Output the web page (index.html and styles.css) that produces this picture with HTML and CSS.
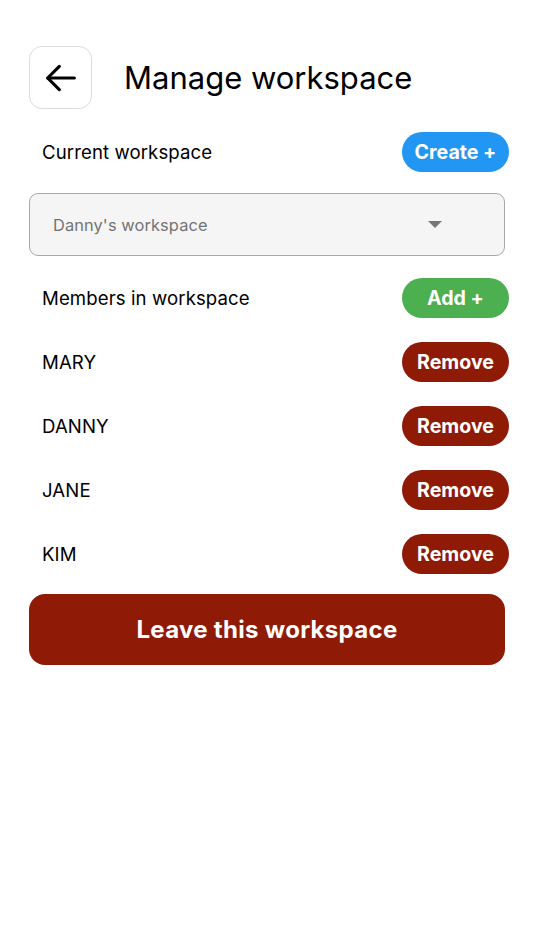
FILE: index.html
```html
<!DOCTYPE html>
<html lang="en">
<head>
    <meta charset="UTF-8">
    <meta name="viewport" content="width=device-width, initial-scale=1.0">
    <title>Manage workspace</title>
    <link rel="stylesheet" href="styles.css">
</head>
<body>
    <div class="page">
        <div class="header">
            <button class="back-btn" aria-label="Back">
                <svg width="40" height="40" viewBox="0 0 24 24" fill="none" stroke="#000" stroke-width="1.9" stroke-linecap="round" stroke-linejoin="round">
                    <path d="M20 12H4"/>
                    <path d="M11 19l-7-7 7-7"/>
                </svg>
            </button>
            <h1>Manage workspace</h1>
        </div>

        <div class="row first">
            <span class="label">Current workspace</span>
            <button class="pill blue">Create +</button>
        </div>

        <div class="select">
            <span>Danny's workspace</span>
            <span class="caret"></span>
        </div>

        <div class="row members">
            <span class="label">Members in workspace</span>
            <button class="pill green">Add +</button>
        </div>

        <div class="row">
            <span class="label">MARY</span>
            <button class="pill red">Remove</button>
        </div>
        <div class="row">
            <span class="label">DANNY</span>
            <button class="pill red">Remove</button>
        </div>
        <div class="row">
            <span class="label">JANE</span>
            <button class="pill red">Remove</button>
        </div>
        <div class="row">
            <span class="label">KIM</span>
            <button class="pill red">Remove</button>
        </div>

        <button class="leave-btn">Leave this workspace</button>
    </div>
</body>
</html>
```

FILE: styles.css
```css
* {
    margin: 0;
    padding: 0;
    box-sizing: border-box;
    font-family: 'Inter', 'Roboto', sans-serif;
}

body {
    background: #fff;
    color: #000;
}

.page {
    display: flex;
    flex-direction: column;
    padding: 46px 29px 0 29px;
}

.header {
    display: flex;
    align-items: center;
    gap: 32px;
}

.back-btn {
    width: 63px;
    height: 63px;
    border: 1px solid #dcdcdc;
    border-radius: 13px;
    background: #fff;
    display: flex;
    align-items: center;
    justify-content: center;
}

h1 {
    font-size: 31px;
    font-weight: 400;
}

.row {
    display: flex;
    align-items: center;
    justify-content: space-between;
    height: 40px;
    margin-top: 24px;
    margin-right: -4px;
    padding-left: 13px;
}

.row.first {
    margin-top: 23px;
}

.row.members {
    margin-top: 22px;
}

.label {
    font-size: 18.6px;
    letter-spacing: 0.1px;
}

.pill {
    width: 107px;
    height: 40px;
    border: none;
    border-radius: 20px;
    color: #fff;
    font-size: 19.6px;
    font-weight: 700;
}

.blue { background: #2196f3; }
.green { background: #4caf50; }
.red { background: #8f1b07; }

.select {
    margin-top: 21px;
    height: 63px;
    border: 1.5px solid #a8a8a8;
    border-radius: 9px;
    background: #f5f5f5;
    display: flex;
    align-items: center;
    justify-content: space-between;
    padding: 0 62px 0 23px;
    font-size: 16.4px;
    letter-spacing: 0.1px;
    color: #737373;
}

.caret {
    width: 0;
    height: 0;
    border-left: 7px solid transparent;
    border-right: 7px solid transparent;
    border-top: 7px solid #777;
}

.leave-btn {
    margin-top: 20px;
    height: 71px;
    border: none;
    border-radius: 16px;
    background: #8f1b07;
    color: #fff;
    font-size: 24px;
    font-weight: 700;
    letter-spacing: 0.3px;
}
```
